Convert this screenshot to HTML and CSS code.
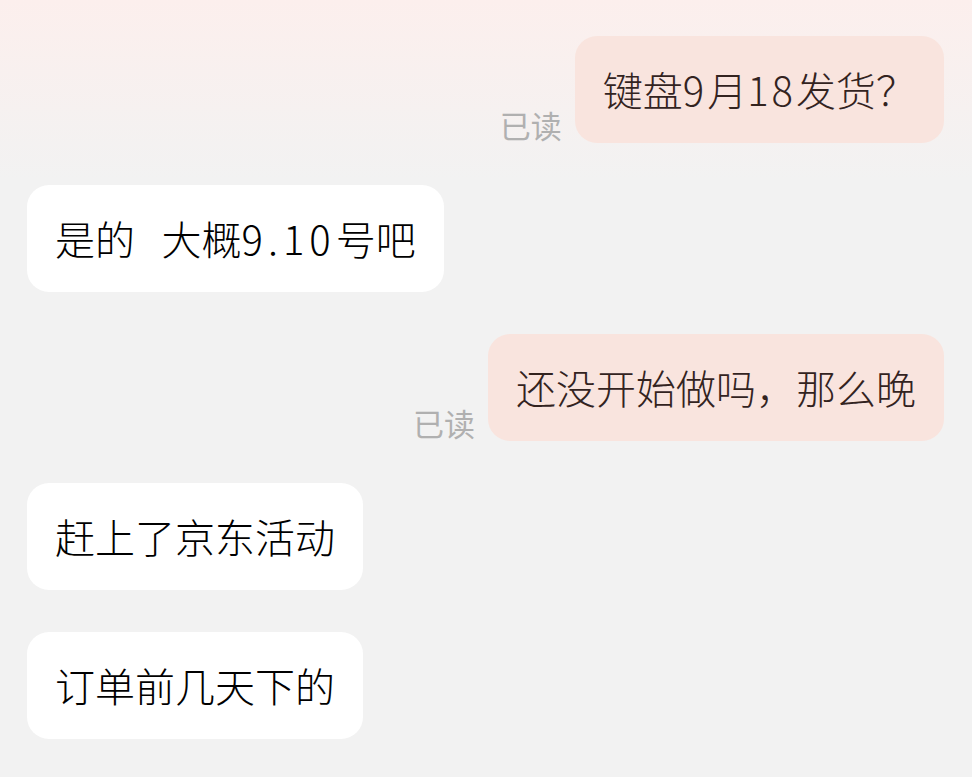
FILE: index.html
```html
<!DOCTYPE html>
<html lang="zh-CN">
<head>
    <meta charset="UTF-8">
    <title>chat</title>
    <link rel="stylesheet" href="styles.css">
</head>
<body>
<div class="chat">
    <div class="row mine">
        <span class="read">已读</span>
        <div class="bubble">键盘<span class="num">9</span>月<span class="num">18</span>发货？</div>
    </div>
    <div class="row">
        <div class="bubble">是的&nbsp;&nbsp;&nbsp;大概<span class="num wide">9.10</span>号吧</div>
    </div>
    <div class="row mine">
        <span class="read">已读</span>
        <div class="bubble">还没开始做吗，那么晚</div>
    </div>
    <div class="row">
        <div class="bubble">赶上了京东活动</div>
    </div>
    <div class="row">
        <div class="bubble">订单前几天下的</div>
    </div>
</div>
</body>
</html>
```

FILE: styles.css
```css
*{
    padding: 0;
    margin: 0;
    box-sizing: border-box;
}
html, body{
    height: 100%;
}
body{
    background: linear-gradient(#fcefed 0, #f2f2f2 180px, #f2f2f2 100%);
    font-family: "Noto Sans CJK SC", "Noto Sans", sans-serif;
    overflow: hidden;
}
.chat{
    display: flex;
    flex-direction: column;
    gap: 42px;
    padding: 36px 28px 0 27px;
}
.row{
    display: flex;
    align-items: flex-end;
}
.row.mine{
    justify-content: flex-end;
}
.bubble{
    background: #fff;
    color: #000;
    font-size: 40px;
    font-weight: 300;
    line-height: 51px;
    padding: 28px 28px;
    border-radius: 22px;
    white-space: nowrap;
}
.mine .bubble{
    background: #f9e4de;
    color: #33231f;
}
.num{
    letter-spacing: 3px;
}
.num.wide{
    letter-spacing: 5px;
}
.read{
    font-size: 31px;
    line-height: 36px;
    color: #b0b0b0;
    margin-right: 13px;
}
```
